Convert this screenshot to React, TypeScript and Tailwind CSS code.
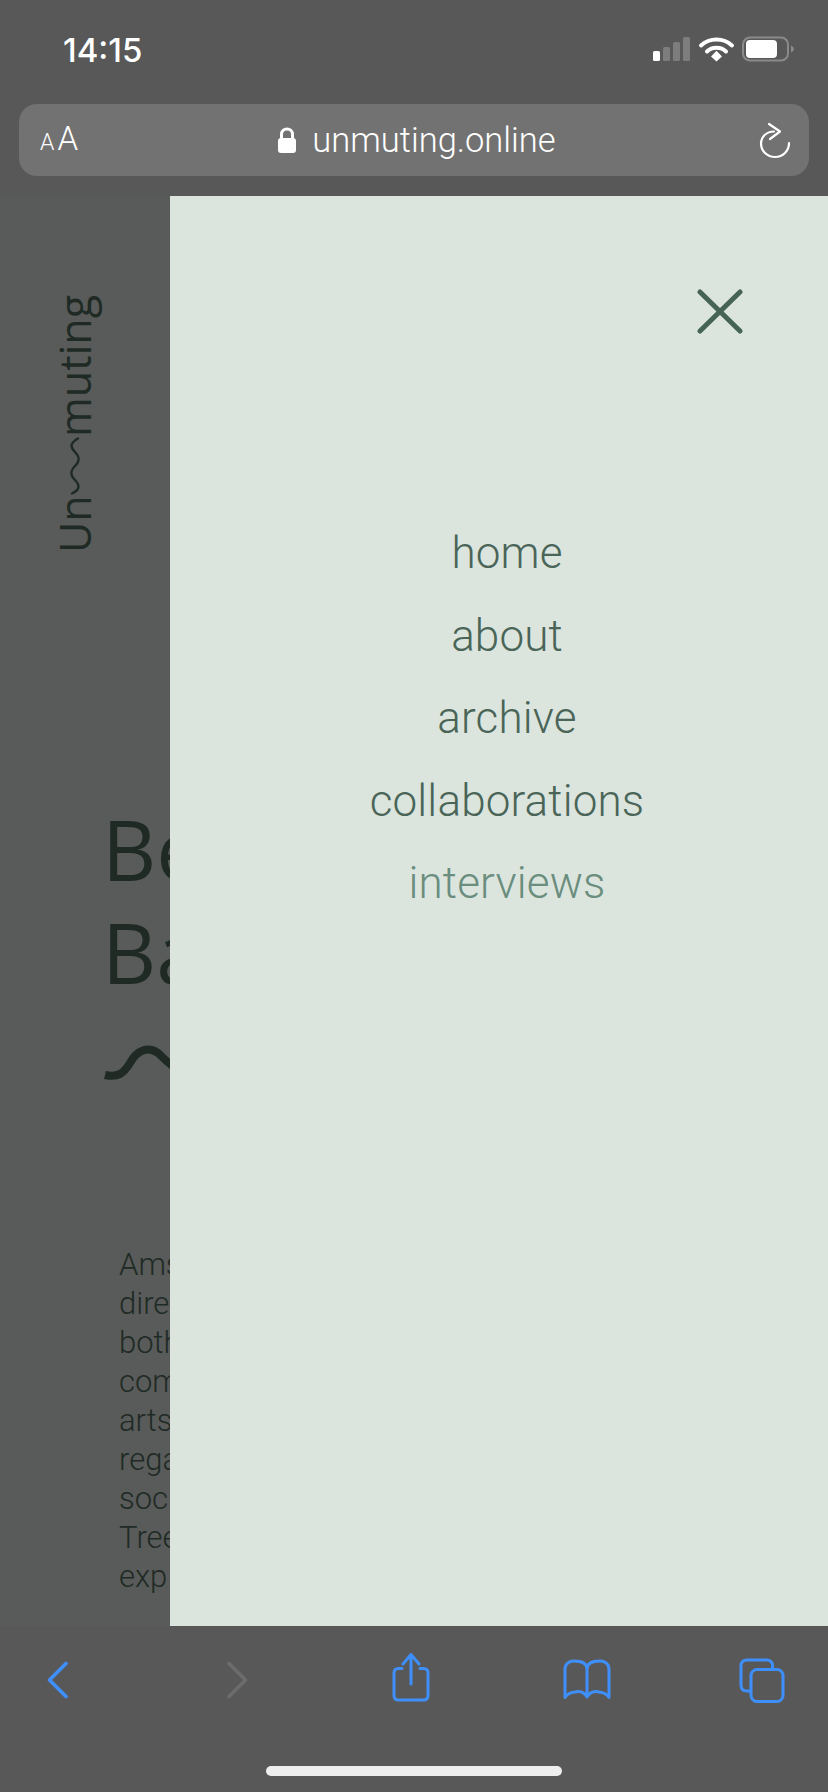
const links = ["home", "about", "archive", "collaborations"];
const bodyLines = ["Ams", "dire", "both", "com", "arts", "rega", "soc", "Tree", "exp"];

function StatusIcons() {
  return (
    <svg width="142" height="26" viewBox="0 0 142 26" className="block">
      <rect x="1" y="15" width="7" height="10" rx="1.5" fill="#fff" />
      <rect x="11" y="11" width="7" height="14" rx="1.5" fill="#7d7d7d" />
      <rect x="21" y="6" width="7" height="19" rx="1.5" fill="#7d7d7d" />
      <rect x="31" y="1" width="7" height="24" rx="1.5" fill="#7d7d7d" />
      <path d="M49 9.5C57.5 1.5 71.5 1.5 80 9.5" fill="none" stroke="#fff" strokeWidth="4" strokeLinecap="round" />
      <path d="M55 15.5C60 10.5 69 10.5 74 15.5" fill="none" stroke="#fff" strokeWidth="4" strokeLinecap="round" />
      <path d="M59 20.5L64.5 14.8L70 20.5L64.5 25.5Z" fill="#fff" />
      <rect x="91" y="1.5" width="45" height="23" rx="7" fill="none" stroke="#8a8a8a" strokeWidth="2" />
      <rect x="94" y="4" width="31" height="18" rx="4" fill="#fff" />
      <path d="M139 9.5C141 10.5 142 12 142 13C142 14 141 15.5 139 16.5Z" fill="#8a8a8a" />
    </svg>
  );
}

function Toolbar() {
  const blue = "#3f8ffb";
  return (
    <div className="flex h-[166px] flex-col bg-[#585858]">
      <div className="flex h-[140px] items-start">
        <svg width="21" height="38" viewBox="0 0 21 38" fill="none" stroke={blue} strokeWidth="3.6" strokeLinecap="round" strokeLinejoin="round" className="ml-[47px] mt-[35px] block">
          <path d="M19 2.5L2.5 19L19 35.5" />
        </svg>
        <svg width="21" height="38" viewBox="0 0 21 38" fill="none" stroke="#6c6c6c" strokeWidth="3.6" strokeLinecap="round" strokeLinejoin="round" className="ml-[159px] mt-[35px] block">
          <path d="M2 2.5L18.5 19L2 35.5" />
        </svg>
        <svg width="38" height="49" viewBox="0 0 38 49" fill="none" stroke={blue} strokeWidth="3" strokeLinecap="round" strokeLinejoin="round" className="ml-[144px] mt-[27px] block">
          <path d="M10 15.5H6.5C3.5 15.5 2 17 2 20V42.5C2 45.5 3.5 47 6.5 47H31.5C34.5 47 36 45.5 36 42.5V20C36 17 34.5 15.5 31.5 15.5H28" />
          <path d="M19 31V2M11 11L19 1.5L27 11" />
        </svg>
        <svg width="48" height="42" viewBox="0 0 48 42" fill="none" stroke={blue} strokeWidth="3" strokeLinecap="round" strokeLinejoin="round" className="ml-[133px] mt-[33px] block">
          <path d="M24 38C21 33 16 32 12 33C8 33.5 4 35 2 38.5V10C2 5 6 2 11 2C18 2 24 4 24 10V38C27 33 32 32 36 33C40 33.5 44 35 46 38.5V10C46 5 42 2 37 2C30 2 24 4 24 10" />
        </svg>
        <svg width="46" height="45" viewBox="0 0 46 45" fill="none" stroke={blue} strokeWidth="3" strokeLinejoin="round" className="ml-[128px] mt-[32px] block">
          <rect x="12" y="11.5" width="32" height="32" rx="6" />
          <path d="M33.5 11V8C33.5 4 31.5 2 27.5 2H8C4 2 2 4 2 8V27C2 31 4 33 8 33H12" />
        </svg>
      </div>
      <div className="ml-[266px] h-[10px] w-[296px] rounded-full bg-[#eeeeee]" />
    </div>
  );
}

export default function App() {
  return (
    <div className="flex h-[1792px] w-[828px] flex-col overflow-hidden bg-[#585858] font-['Inter',sans-serif]">
      <div className="flex h-[104px] items-start justify-between pl-[63px] pr-[34px] pt-[36px]">
        <span className="text-[33px] font-medium leading-[28px] text-white">14:15</span>
        <StatusIcons />
      </div>
      <div className="relative mx-[19px] flex h-[72px] items-center justify-center rounded-[18px] bg-[#727272] pl-[5px] text-white">
        <span className="absolute left-[21px] top-[18px] flex items-baseline leading-[34px] font-['Roboto',sans-serif]">
          <span className="text-[23px] font-light">A</span>
          <span className="ml-[3px] text-[33px] font-light">A</span>
        </span>
        <svg width="20" height="26" viewBox="0 0 20 26" className="mr-[15px] block" fill="none">
          <path d="M4.5 12V7.5C4.5 4 7 2 10 2C13 2 15.5 4 15.5 7.5V12" stroke="#fff" strokeWidth="3" />
          <rect x="1" y="11" width="18" height="15" rx="3" fill="#fff" />
        </svg>
        <span className="text-[34.5px] font-light leading-[40px] font-['Roboto',sans-serif]">unmuting.online</span>
        <svg width="32" height="38" viewBox="0 0 32 38" className="absolute right-[18px] top-[17px] block" fill="none" stroke="#fff" strokeWidth="2.2" strokeLinecap="round" strokeLinejoin="round">
          <path d="M15 10.5C7.5 10.5 2 16 2 22.5C2 30 8 36 16 36C24 36 30 30 30 22" />
          <path d="M10 3L21 10.5L11 18" />
        </svg>
      </div>
      <div className="h-[20px]" />

      <div className="flex min-h-0 flex-1">
        <div className="flex w-[170px] shrink-0 flex-col overflow-hidden bg-[#585b59] text-[#1f2a25]">
          <div className="ml-[53px] mt-[98px] flex h-[259px] w-[44px] rotate-180 items-center justify-start [writing-mode:vertical-rl] font-['Open_Sans',sans-serif] text-[43px] leading-[44px]">
            <span>Un</span>
            <svg width="12" height="58" viewBox="0 0 12 58" fill="none" stroke="#1f2a25" strokeWidth="2.4" strokeLinecap="round" className="my-[6px] block shrink-0">
              <path d="M9 1.5C1 5 1 10 6 15C11 20 11 24 6 29C1 34 1 38 6 43C11 48 11 52 3 56.5" />
            </svg>
            <span>muting</span>
          </div>
          <div className="mt-[244px] whitespace-nowrap pl-[102px] font-['Open_Sans',sans-serif] text-[84px] font-normal leading-[103px]">
            <div>Be</div>
            <div>Ba</div>
          </div>
          <svg width="170" height="40" viewBox="0 0 170 40" fill="none" className="mt-[39px] block shrink-0">
            <path d="M105 33C118 36 124 31 130 21C137 8 148 4 158 11C164 16 168 22 176 26" stroke="#1f2a25" strokeWidth="8" />
          </svg>
          <div className="mt-[163px] whitespace-nowrap pl-[119px] font-['Roboto',sans-serif] text-[31px] font-light leading-[39px]">
            {bodyLines.map((line) => (
              <div key={line}>{line}</div>
            ))}
          </div>
        </div>

        <div className="flex flex-1 flex-col bg-[#dbe5de]">
          <div className="flex justify-end pr-[84px] pt-[93px]">
            <svg width="48" height="46" viewBox="0 0 48 46" className="block" fill="none" stroke="#466456" strokeWidth="5" strokeLinecap="round">
              <path d="M4 3L44 42" />
              <path d="M44 3L4 42" />
            </svg>
          </div>
          <nav className="mt-[177px] flex flex-col items-center pl-[16px] font-['Roboto',sans-serif] text-[44px] font-light leading-[82.5px] tracking-[0.15px] text-[#4a6558]">
            {links.map((link) => (
              <a key={link}>{link}</a>
            ))}
            <a className="text-[#6a8d7d]">interviews</a>
          </nav>
        </div>
      </div>

      <Toolbar />
    </div>
  );
}
